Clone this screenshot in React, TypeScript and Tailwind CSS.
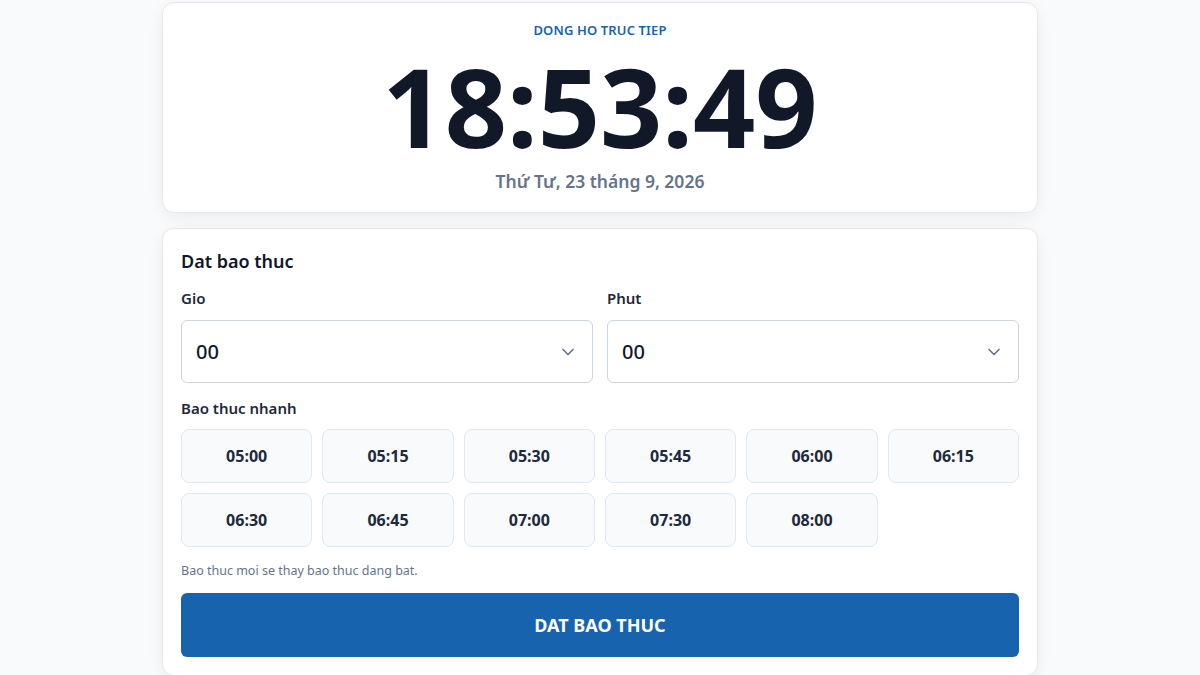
import { ChevronDown } from "lucide-react";

const quick = ["05:00", "05:15", "05:30", "05:45", "06:00", "06:15", "06:30", "06:45", "07:00", "07:30", "08:00"];

function Select({ label, value }: { label: string; value: string }) {
  return (
    <div className="flex flex-col">
      <span className="text-[15px] font-semibold leading-[22px] text-[#1e293b]">{label}</span>
      <div className="mt-[11px] flex h-[63px] items-center justify-between rounded-md border border-[#cbd5e1] bg-white pl-[14px] pr-[14px]">
        <span className="text-[20px] font-medium text-[#0f172a]">{value}</span>
        <ChevronDown className="h-[20px] w-[20px] text-[#64748b]" strokeWidth={2} />
      </div>
    </div>
  );
}

export default function App() {
  return (
    <div
      className="min-h-screen bg-[#f8fafc]"
      style={{ fontFamily: '"Noto Sans", "Open Sans", sans-serif' }}
    >
      <div className="mx-auto flex w-[876px] flex-col gap-[15px] pt-[2px]">
        {/* Clock */}
        <section className="flex h-[211px] flex-col items-center rounded-xl border border-[#e5e7eb] bg-white shadow-[0_4px_16px_rgba(15,23,42,0.06)]">
          <div className="mt-[17px] text-[13px] font-semibold leading-[20px] tracking-[0.01em] text-[#1763ad]">
            DONG HO TRUC TIEP
          </div>
          <div className="mt-[22px] text-[109px] font-bold leading-[88px] text-[#111827]">
            18:53:49
          </div>
          <div className="mt-[18px] text-[17.5px] font-semibold leading-[26px] text-[#64748b]">
            Thứ Tư, 23 tháng 9, 2026
          </div>
        </section>

        {/* Alarm */}
        <section className="rounded-xl border border-[#e5e7eb] bg-white px-[18px] pb-[18px] pt-[19px] shadow-[0_4px_16px_rgba(15,23,42,0.06)]">
          <h2 className="text-[18px] font-semibold leading-[26px] text-[#0f172a]">Dat bao thuc</h2>
          <div className="mt-[13px] grid grid-cols-2 gap-[14px]">
            <Select label="Gio" value="00" />
            <Select label="Phut" value="00" />
          </div>
          <div className="mt-[14px] text-[15px] font-semibold leading-[22px] text-[#1e293b]">Bao thuc nhanh</div>
          <div className="mt-[10px] grid grid-cols-6 gap-[10px]">
            {quick.map((t) => (
              <button
                key={t}
                className="flex h-[54px] items-center justify-center rounded-lg border border-[#e2e8f0] bg-[#f8fafc] text-[16px] font-bold text-[#1e293b]"
              >
                {t}
              </button>
            ))}
          </div>
          <p className="mt-[15px] text-[12.5px] leading-[18px] text-[#64748b]">
            Bao thuc moi se thay bao thuc dang bat.
          </p>
          <button className="mt-[13px] flex h-[64px] w-full items-center justify-center rounded-md bg-[#1763ad] text-[18px] font-bold text-white">
            DAT BAO THUC
          </button>
        </section>
      </div>
    </div>
  );
}
